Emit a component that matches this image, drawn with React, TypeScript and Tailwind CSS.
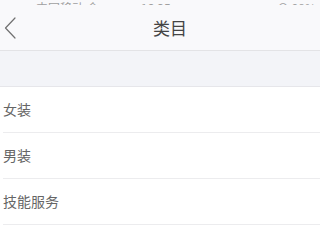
import * as React from 'react'

const CATEGORIES = ['女装', '男装', '技能服务']

export default function App() {
  return (
    <div
      className="w-[320px] h-[240px] overflow-hidden bg-white"
      style={{ fontFamily: '"Noto Sans CJK SC", "Noto Sans", sans-serif' }}
    >
      {/* Status bar (cut off at the top) */}
      <div className="h-[5px] overflow-hidden bg-[#f9f9fb] flex items-end text-[12px] leading-none text-[#a0a0a0]">
        <span className="ml-[36px] mb-[-9px]">中国移动 令</span>
        <span className="ml-[42px] mb-[-9px]">16:35</span>
        <span className="ml-auto mr-[4px] mb-[-9px]">⊙ 98%</span>
      </div>

      {/* Header */}
      <header className="h-[46px] bg-[#f9f9fb] border-b border-[#e3e3e6] grid grid-cols-[20px_1fr] items-center">
        <button className="h-full flex items-center pl-[4px]">
          <svg width="12" height="22" viewBox="0 0 12 22" fill="none">
            <path d="M11 1L1.5 11L11 21" stroke="#707070" strokeWidth="1.2" strokeLinecap="round" strokeLinejoin="round" />
          </svg>
        </button>
        <h1 className="text-center text-[17px] font-normal text-[#444] leading-none">类目</h1>
      </header>

      {/* Gray band */}
      <div className="h-[36px] bg-[#f3f4f8] border-b border-[#e6e6ea]" />

      {/* Category list */}
      <ul className="pl-[3px]">
        {CATEGORIES.map(name => (
          <li key={name} className="h-[46px] border-b border-[#ececee] flex items-center text-[14px] font-normal text-[#666]">
            {name}
          </li>
        ))}
      </ul>
    </div>
  )
}
